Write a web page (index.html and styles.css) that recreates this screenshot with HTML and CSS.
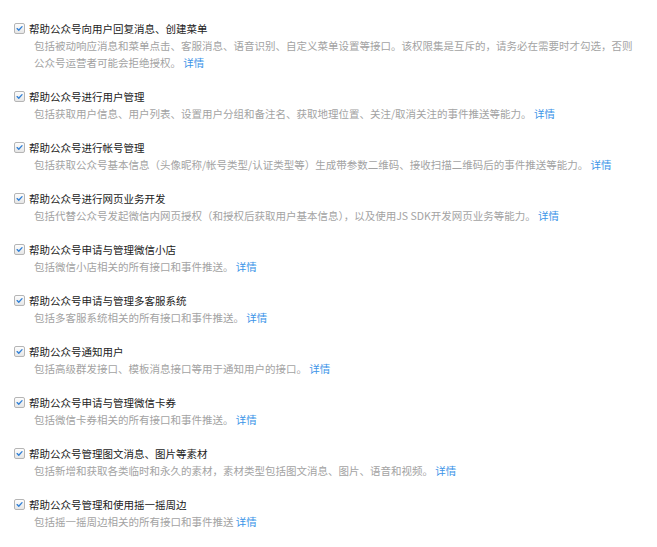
FILE: index.html
```html
<!DOCTYPE html>
<html lang="zh-CN">
<head>
<meta charset="utf-8">
<title>授权权限集</title>
<link rel="stylesheet" href="styles.css">
</head>
<body>
<div class="page">
  <ul class="scopes">
    <li class="scope">
      <div class="scope-title"><span class="check"><svg viewBox="0 0 11 11"><path d="M2.6 5.6 L4.6 7.6 L8.6 3.2"/></svg></span>帮助公众号向用户回复消息、创建菜单</div>
      <p class="scope-desc">包括被动响应消息和菜单点击、客服消息、语音识别、自定义菜单设置等接口。该权限集是互斥的，请务必在需要时才勾选，否则公众号运营者可能会拒绝授权。 <a class="more" href="#">详情</a></p>
    </li>
    <li class="scope">
      <div class="scope-title"><span class="check"><svg viewBox="0 0 11 11"><path d="M2.6 5.6 L4.6 7.6 L8.6 3.2"/></svg></span>帮助公众号进行用户管理</div>
      <p class="scope-desc">包括获取用户信息、用户列表、设置用户分组和备注名、获取地理位置、关注/取消关注的事件推送等能力。 <a class="more" href="#">详情</a></p>
    </li>
    <li class="scope">
      <div class="scope-title"><span class="check"><svg viewBox="0 0 11 11"><path d="M2.6 5.6 L4.6 7.6 L8.6 3.2"/></svg></span>帮助公众号进行帐号管理</div>
      <p class="scope-desc">包括获取公众号基本信息（头像昵称/帐号类型/认证类型等）生成带参数二维码、接收扫描二维码后的事件推送等能力。 <a class="more" href="#">详情</a></p>
    </li>
    <li class="scope">
      <div class="scope-title"><span class="check"><svg viewBox="0 0 11 11"><path d="M2.6 5.6 L4.6 7.6 L8.6 3.2"/></svg></span>帮助公众号进行网页业务开发</div>
      <p class="scope-desc">包括代替公众号发起微信内网页授权（和授权后获取用户基本信息），以及使用JS SDK开发网页业务等能力。 <a class="more" href="#">详情</a></p>
    </li>
    <li class="scope">
      <div class="scope-title"><span class="check"><svg viewBox="0 0 11 11"><path d="M2.6 5.6 L4.6 7.6 L8.6 3.2"/></svg></span>帮助公众号申请与管理微信小店</div>
      <p class="scope-desc">包括微信小店相关的所有接口和事件推送。 <a class="more" href="#">详情</a></p>
    </li>
    <li class="scope">
      <div class="scope-title"><span class="check"><svg viewBox="0 0 11 11"><path d="M2.6 5.6 L4.6 7.6 L8.6 3.2"/></svg></span>帮助公众号申请与管理多客服系统</div>
      <p class="scope-desc">包括多客服系统相关的所有接口和事件推送。 <a class="more" href="#">详情</a></p>
    </li>
    <li class="scope">
      <div class="scope-title"><span class="check"><svg viewBox="0 0 11 11"><path d="M2.6 5.6 L4.6 7.6 L8.6 3.2"/></svg></span>帮助公众号通知用户</div>
      <p class="scope-desc">包括高级群发接口、模板消息接口等用于通知用户的接口。 <a class="more" href="#">详情</a></p>
    </li>
    <li class="scope">
      <div class="scope-title"><span class="check"><svg viewBox="0 0 11 11"><path d="M2.6 5.6 L4.6 7.6 L8.6 3.2"/></svg></span>帮助公众号申请与管理微信卡券</div>
      <p class="scope-desc">包括微信卡券相关的所有接口和事件推送。 <a class="more" href="#">详情</a></p>
    </li>
    <li class="scope">
      <div class="scope-title"><span class="check"><svg viewBox="0 0 11 11"><path d="M2.6 5.6 L4.6 7.6 L8.6 3.2"/></svg></span>帮助公众号管理图文消息、图片等素材</div>
      <p class="scope-desc">包括新增和获取各类临时和永久的素材，素材类型包括图文消息、图片、语音和视频。 <a class="more" href="#">详情</a></p>
    </li>
    <li class="scope">
      <div class="scope-title"><span class="check"><svg viewBox="0 0 11 11"><path d="M2.6 5.6 L4.6 7.6 L8.6 3.2"/></svg></span>帮助公众号管理和使用摇一摇周边</div>
      <p class="scope-desc">包括摇一摇周边相关的所有接口和事件推送 <a class="more" href="#">详情</a></p>
    </li>
  </ul>
  <div class="footer-bar"></div>
</div>
</body>
</html>
```

FILE: styles.css
```css
html, body {
  margin: 0;
  padding: 0;
  background: #ffffff;
}

body {
  font-family: "Microsoft YaHei", "Noto Sans CJK SC", "Noto Sans", sans-serif;
  font-size: 10.5px;
  line-height: 17px;
}

.page {
  min-height: 100vh;
  display: flex;
  flex-direction: column;
}

.scopes {
  flex: 1;
  list-style: none;
  margin: 0;
  padding: 20px 20px 0 14px;
}

.scope {
  margin-bottom: 17px;
}

.scope-title {
  display: flex;
  align-items: center;
  color: #222222;
}

.check {
  flex: none;
  width: 11px;
  height: 11px;
  margin-right: 4px;
  border: 1px solid #b5b5b5;
  border-radius: 2px;
  background: linear-gradient(#fdfdfd, #e6e6e6);
  box-sizing: border-box;
  display: flex;
}

.check svg {
  width: 100%;
  height: 100%;
}

.check path {
  fill: none;
  stroke: #2f7fd6;
  stroke-width: 1.6;
  stroke-linecap: round;
  stroke-linejoin: round;
}

.scope-desc {
  margin: 0;
  padding-left: 20px;
  color: #a3a3a3;
}

.more {
  color: #3b94e8;
  text-decoration: none;
}

.footer-bar {
  flex: none;
  height: 2px;
  background: linear-gradient(90deg, #3c7168 0, #3f786e 455px, #4b998d 456px, #4e9f93 100%);
}
```
